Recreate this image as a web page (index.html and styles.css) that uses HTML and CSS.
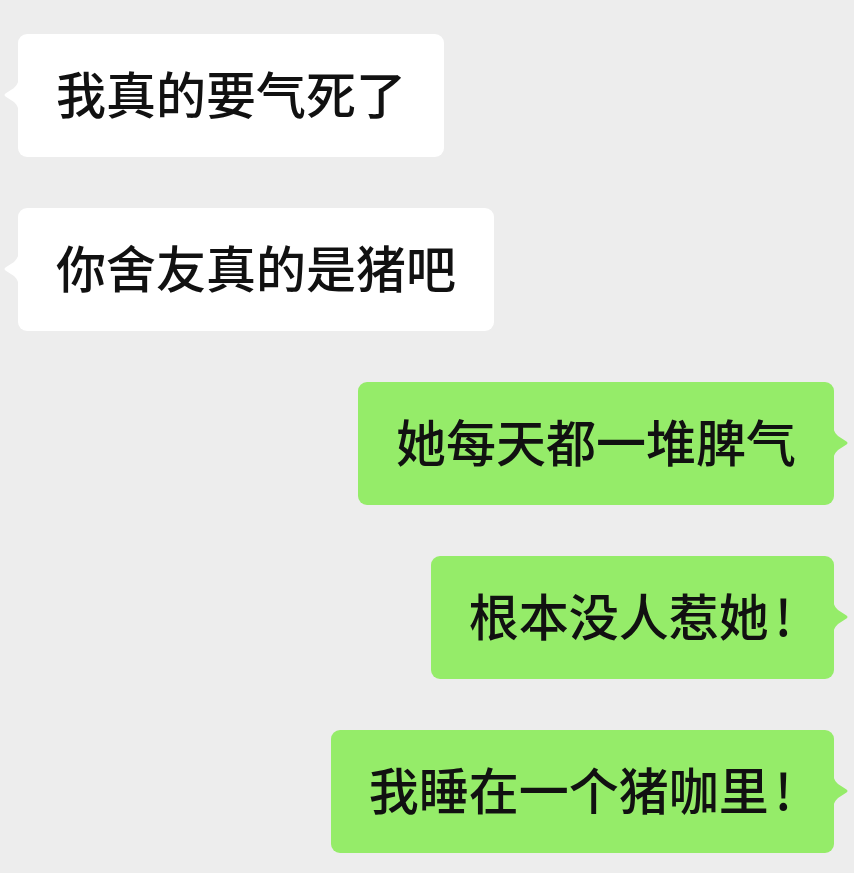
FILE: index.html
```html
<!DOCTYPE html>
<html lang="zh-CN">
<head>
  <meta charset="UTF-8">
  <title>聊天</title>
  <meta name="viewport" content="width=device-width, initial-scale=1.0"/>
  <link rel="stylesheet" href="styles.css">
</head>
<body>

<div class="chat">
  <div class="row left">
    <div class="bubble">
      <svg class="tail" viewBox="0 0 16 40"><path d="M16 0 C16 7 14 10 11 13 L2.5 18.5 Q0.5 20 2.5 21.5 L11 27 C14 30 16 33 16 40 Z"/></svg>
      我真的要气死了
    </div>
  </div>

  <div class="row left">
    <div class="bubble">
      <svg class="tail" viewBox="0 0 16 40"><path d="M16 0 C16 7 14 10 11 13 L2.5 18.5 Q0.5 20 2.5 21.5 L11 27 C14 30 16 33 16 40 Z"/></svg>
      你舍友真的是猪吧
    </div>
  </div>

  <div class="row right">
    <div class="bubble">
      她每天都一堆脾气
      <svg class="tail" viewBox="0 0 16 40"><path d="M0 0 C0 7 2 10 5 13 L13.5 18.5 Q15.5 20 13.5 21.5 L5 27 C2 30 0 33 0 40 Z"/></svg>
    </div>
  </div>

  <div class="row right">
    <div class="bubble">
      根本没人惹她<span class="bang">!</span>
      <svg class="tail" viewBox="0 0 16 40"><path d="M0 0 C0 7 2 10 5 13 L13.5 18.5 Q15.5 20 13.5 21.5 L5 27 C2 30 0 33 0 40 Z"/></svg>
    </div>
  </div>

  <div class="row right">
    <div class="bubble">
      我睡在一个猪咖里<span class="bang">!</span>
      <svg class="tail" viewBox="0 0 16 40"><path d="M0 0 C0 7 2 10 5 13 L13.5 18.5 Q15.5 20 13.5 21.5 L5 27 C2 30 0 33 0 40 Z"/></svg>
    </div>
  </div>
</div>

</body>
</html>
```

FILE: styles.css
```css
body {
  margin: 0;
  background: #ededed;
  font-family: "Noto Sans CJK SC", "Noto Sans", sans-serif;
  color: #111;
}
.chat {
  display: flex;
  flex-direction: column;
  gap: 51px;
  padding: 34px 20px 20px 18px;
}
.row {
  display: flex;
}
.row.right {
  justify-content: flex-end;
}
.bubble {
  position: relative;
  box-sizing: border-box;
  height: 123px;
  line-height: 117px;
  padding: 0 38px 6px;
  font-size: 50px;
  font-weight: 500;
  border-radius: 9px;
  background: #fff;
  white-space: nowrap;
}
.right .bubble {
  background: #95ec69;
}
.bang {
  margin-left: 6px;
  margin-right: 4px;
}
.tail {
  position: absolute;
  top: 50%;
  width: 16px;
  height: 40px;
  margin-top: -21px;
}
.left .tail {
  left: -15px;
  fill: #fff;
}
.right .tail {
  right: -15px;
  fill: #95ec69;
}
```
